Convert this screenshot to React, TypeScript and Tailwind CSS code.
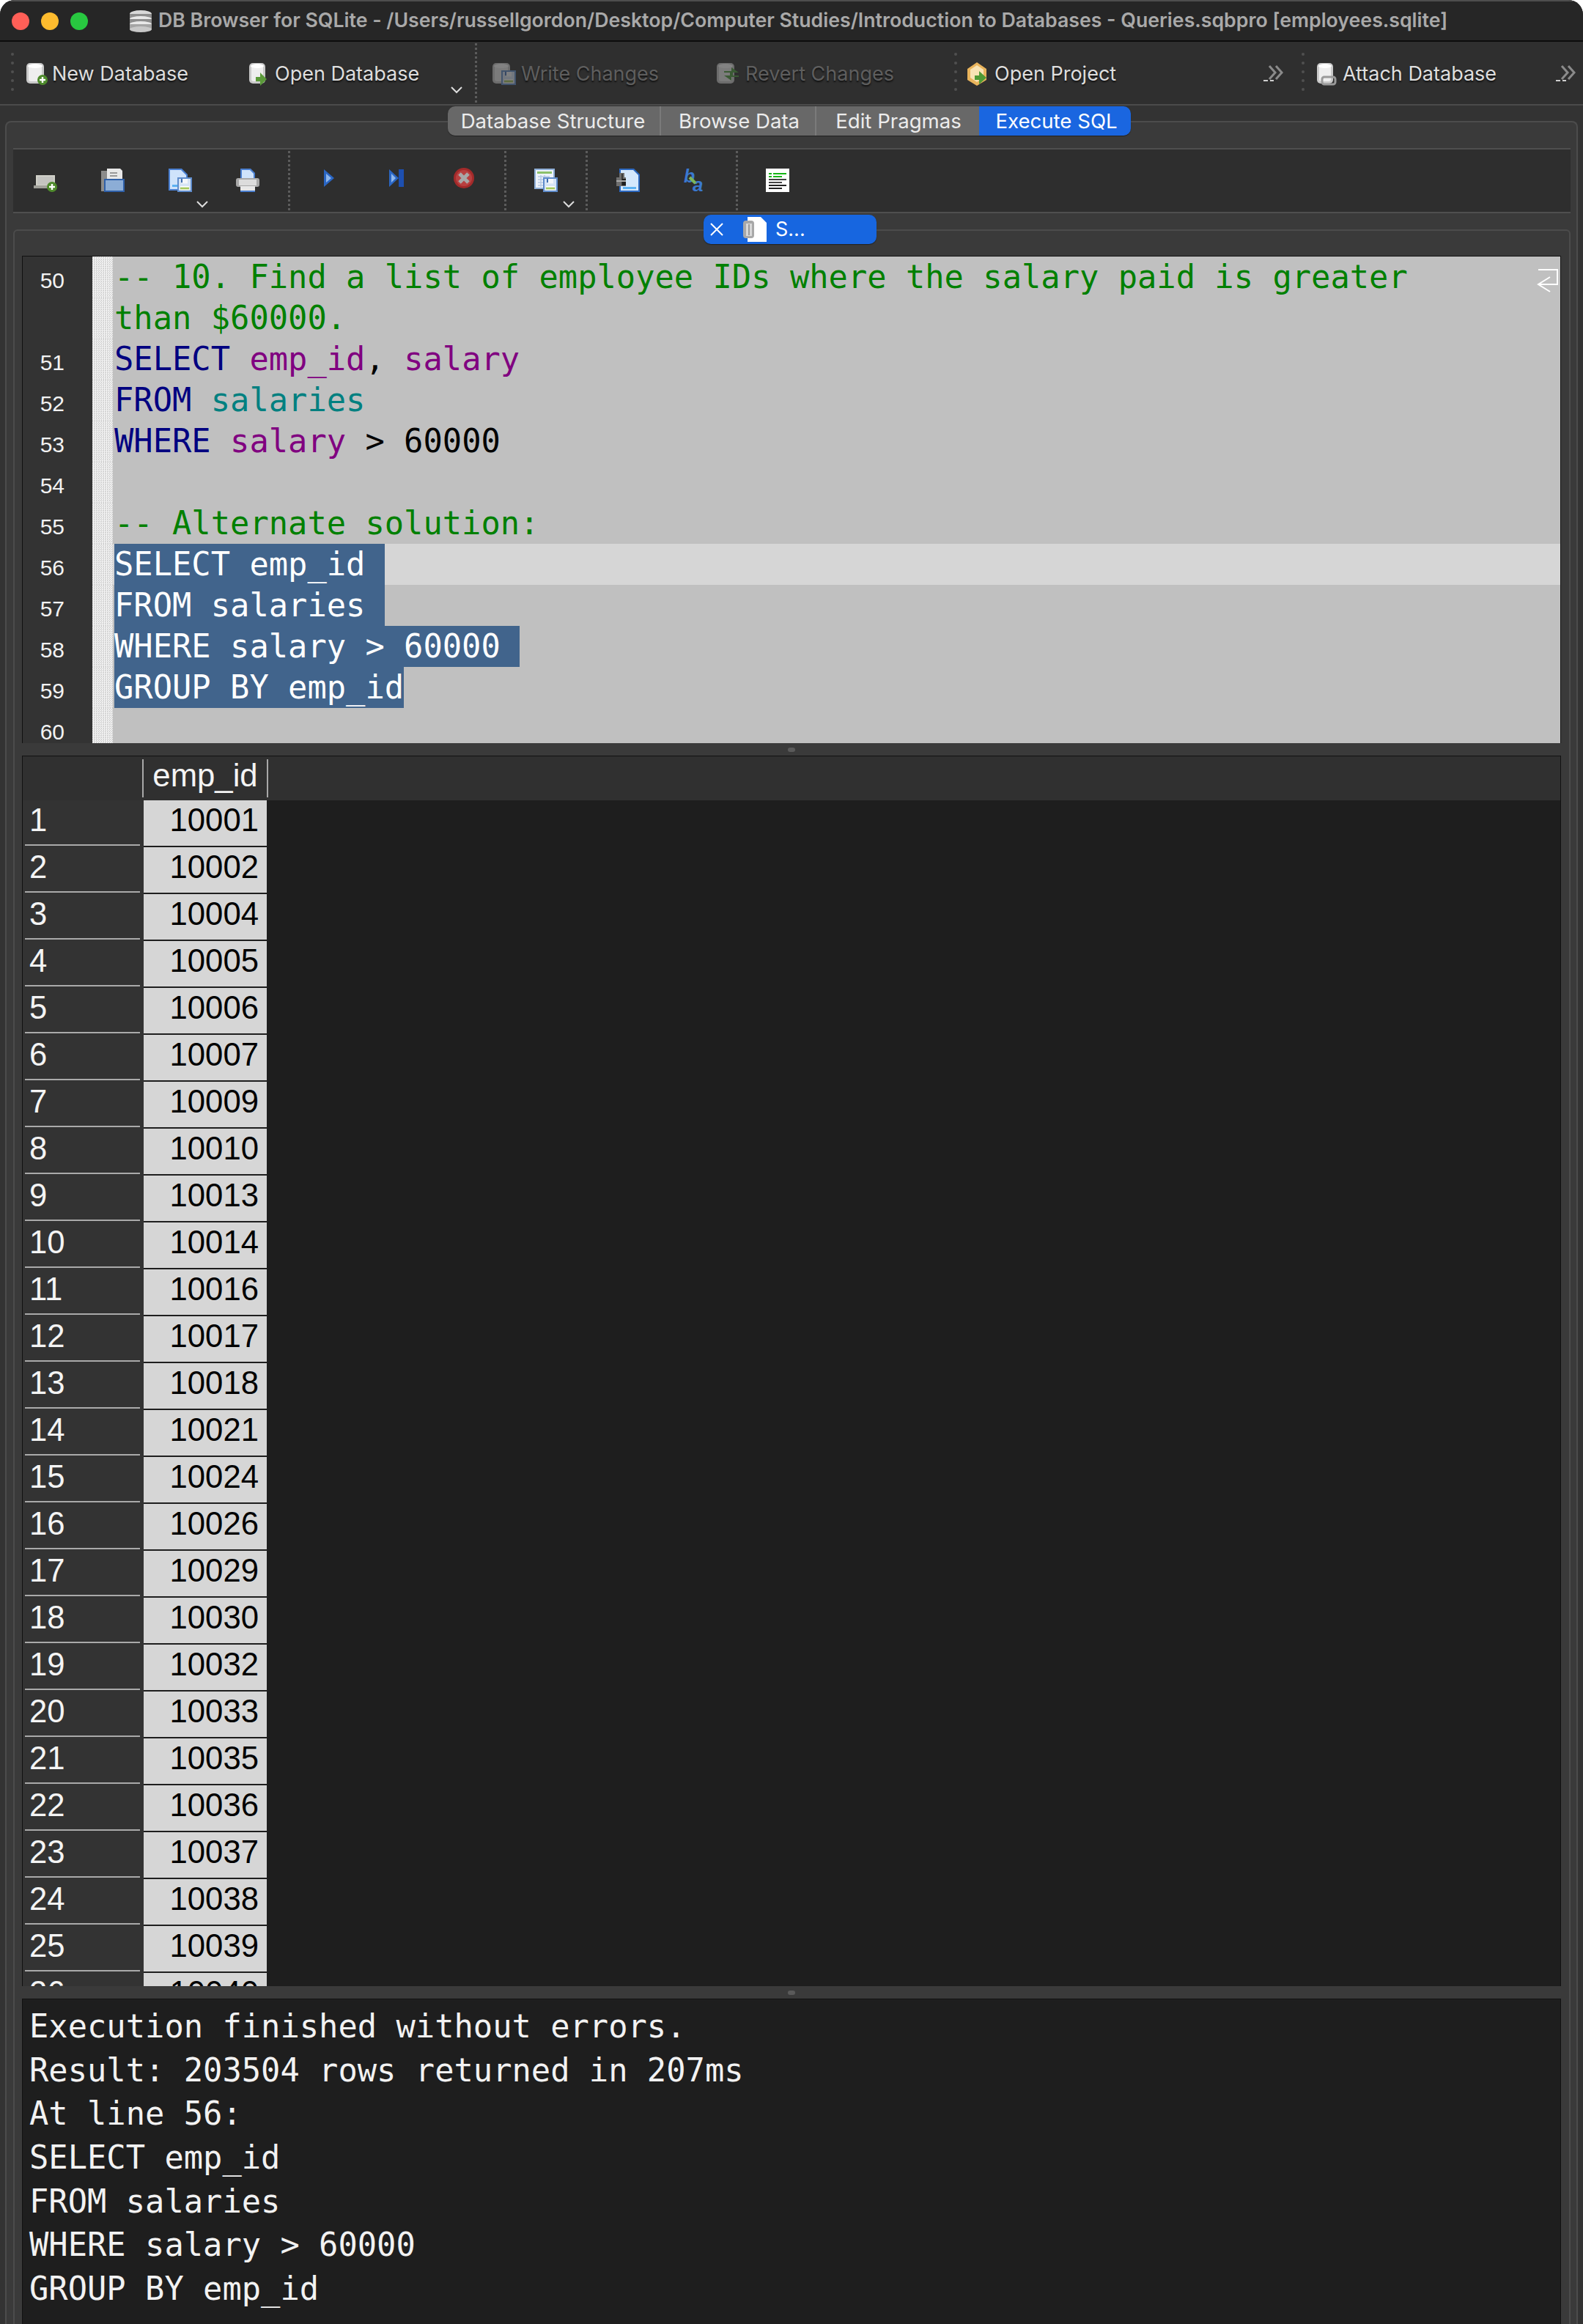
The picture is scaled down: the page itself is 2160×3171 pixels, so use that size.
import React from 'react';

const MONO = "font-['DejaVu_Sans_Mono',monospace] text-[43.75px] whitespace-pre";

const rowValues = [
    '10001', '10002', '10004', '10005', '10006', '10007', '10009', '10010', '10013', '10014', '10016', '10017', '10018',
    '10021', '10024', '10026', '10029', '10030', '10032', '10033', '10035', '10036', '10037', '10038', '10039', '10040',
];

const outputLines = [
    'Execution finished without errors.',
    'Result: 203504 rows returned in 207ms',
    'At line 56:',
    'SELECT emp_id',
    'FROM salaries',
    'WHERE salary > 60000',
    'GROUP BY emp_id',
];

/* ---------- icons ---------- */

const Cylinder = ({ x = 0, w = 24 }: { x?: number; w?: number }) => (
    <g>
        <rect x={x} y="1" width={w} height="28" rx="5" fill="#c9c9c9" />
        <rect x={x + 3} y="4" width={w - 6} height="22" rx="3" fill="#eeeeee" />
        <ellipse cx={x + w / 2} cy="5" rx={w / 2 - 2} ry="3" fill="#ffffff" />
    </g>
);

const PlusBadge = ({ cx = 24, cy = 25 }: { cx?: number; cy?: number }) => (
    <g>
        <circle cx={cx} cy={cy} r="7" fill="#4e8a2c" />
        <rect x={cx - 4} y={cy - 1.2} width="8" height="2.4" fill="#fff" />
        <rect x={cx - 1.2} y={cy - 4} width="2.4" height="8" fill="#fff" />
    </g>
);

const Floppy = ({ x = 12, y = 12, s = 20 }: { x?: number; y?: number; s?: number }) => (
    <g>
        <rect x={x} y={y} width={s} height={s} fill="#5f8ccb" />
        <rect x={x + 2} y={y + 2} width={s - 4} height={s - 4} fill="#d6e4f6" />
        <rect x={x + 5} y={y + 2} width={s - 11} height={s * 0.32} fill="#f4f7fb" />
        <rect x={x + 5} y={y + 2} width="2" height={s * 0.26} fill="#3f6db0" />
        <rect x={x + 4} y={y + s * 0.6} width={s - 8} height={s * 0.28} fill="#fff" />
        <rect x={x + 4} y={y + s * 0.68} width={s - 8} height={s * 0.14} fill="#a5c95f" />
    </g>
);

const PageShape = ({ x = 0, w = 24, h = 28 }: { x?: number; w?: number; h?: number }) => (
    <g>
        <path d={`M${x} 0h${w - 8}l8 8v${h - 8}h-${w}z`} fill="#4a7fd0" />
        <path d={`M${x + 2} 2h${w - 11}l7 7v${h - 11}h-${w - 4}z`} fill="#cfe3fb" />
        <rect x={x + 5} y={h - 8} width={w - 10} height="3" fill="#5db1f2" />
    </g>
);

const NewDbIcon = () => (
    <svg width="32" height="32" viewBox="0 0 32 32">
        <Cylinder x={0} w={24} />
        <PlusBadge cx={22} cy={24} />
    </svg>
);

const OpenDbIcon = () => (
    <svg width="28" height="32" viewBox="0 0 28 32">
        <Cylinder x={0} w={22} />
        <path d="M9 20h6v-6l9 9-9 9v-6H9z" fill="#5b9a3a" />
    </svg>
);

const WriteDbIcon = () => (
    <svg width="32" height="32" viewBox="0 0 32 32">
        <Cylinder x={0} w={24} />
        <Floppy x={12} y={11} s={20} />
    </svg>
);

const RevertDbIcon = () => (
    <svg width="32" height="32" viewBox="0 0 32 32">
        <Cylinder x={0} w={24} />
        <path d="M10 12h10V7l10 7H10zM30 20H20v5L10 18h20z" fill="#4c9a3c" />
        <rect x="18" y="13" width="4" height="6" fill="#4c9a3c" />
    </svg>
);

const ProjectIcon = () => (
    <svg width="32" height="32" viewBox="0 0 32 32">
        <path d="M15 0l13 9v15l-13 8-13-8V9z" fill="#e9b45c" />
        <path d="M15 4l9 6v11l-9 6-9-6V10z" fill="#f8e3b4" />
        <path d="M12 18h6v-6l10 9-10 9v-6h-6z" fill="#4f9a35" />
    </svg>
);

const AttachIcon = () => (
    <svg width="32" height="32" viewBox="0 0 32 32">
        <Cylinder x={2} w={22} />
        <rect x="9" y="20" width="18" height="10" rx="3" fill="none" stroke="#9a9a9a" strokeWidth="3" />
    </svg>
);

const AddRecordIcon = () => (
    <svg width="32" height="32" viewBox="0 0 32 32">
        <rect x="3" y="9" width="26" height="15" fill="#d0d0c8" />
        <rect x="5" y="11" width="22" height="11" fill="#c4c4c0" />
        <rect x="0" y="23" width="22" height="4" fill="#a0a09a" />
        <PlusBadge cx={25} cy={25} />
    </svg>
);

const OpenFileIcon = () => (
    <svg width="32" height="32" viewBox="0 0 32 32">
        <rect x="0" y="3" width="10" height="28" fill="#8c8c8c" />
        <path d="M8 0h18l3 3v12H8z" fill="#e8e8e8" />
        <rect x="12" y="5" width="10" height="2" fill="#999" />
        <rect x="12" y="9" width="10" height="2" fill="#999" />
        <rect x="4" y="14" width="28" height="18" fill="#2f60a8" />
        <rect x="6" y="16" width="24" height="14" fill="#8cadd6" />
    </svg>
);

const SaveFileIcon = () => (
    <svg width="32" height="32" viewBox="0 0 32 32">
        <PageShape w={26} h={30} />
        <Floppy x={12} y={12} s={20} />
    </svg>
);

const PrintIcon = () => (
    <svg width="32" height="32" viewBox="0 0 32 32">
        <path d="M6 0h14l6 6v12H6z" fill="#4a7fd0" />
        <path d="M8 2h11l5 5v11H8z" fill="#cfe3fb" />
        <rect x="0" y="13" width="32" height="12" rx="3" fill="#a8a8a8" />
        <rect x="4" y="15" width="24" height="8" fill="#dcdcdc" />
        <rect x="6" y="24" width="20" height="6" fill="#e8e8e8" />
        <rect x="6" y="30" width="20" height="2" fill="#4a7fd0" />
    </svg>
);

const PlayIcon = () => (
    <svg width="14" height="24" viewBox="0 0 14 24">
        <path d="M0 0l14 12L0 24z" fill="#2a66c4" />
        <path d="M3 6l7 6-7 6z" fill="#8fb7ec" />
    </svg>
);

const PlayLineIcon = () => (
    <svg width="20" height="24" viewBox="0 0 20 24">
        <path d="M0 0l13 12L0 24z" fill="#2a66c4" />
        <path d="M3 6l6 6-6 6z" fill="#8fb7ec" />
        <rect x="13" y="0" width="7" height="24" fill="#1d4fb0" />
    </svg>
);

const StopIcon = () => (
    <svg width="28" height="28" viewBox="0 0 28 28">
        <circle cx="14" cy="14" r="14" fill="#a32a2a" />
        <circle cx="14" cy="14" r="11" fill="#b84040" />
        <path d="M8 8l12 12M20 8L8 20" stroke="#a8a8a8" strokeWidth="5" />
    </svg>
);

const SaveResultsIcon = () => (
    <svg width="32" height="32" viewBox="0 0 32 32">
        <rect x="0" y="0" width="28" height="28" fill="#8fafd8" />
        <rect x="2" y="2" width="24" height="24" fill="#eef3fa" />
        <rect x="4" y="4" width="20" height="3" fill="#8cc06a" />
        <path d="M5 11h16M5 15h16M5 19h16M5 23h16M9 9v16M14 9v16" stroke="#b6c9e4" strokeWidth="1.5" />
        <Floppy x={12} y={12} s={20} />
    </svg>
);

const FindIcon = () => (
    <svg width="32" height="32" viewBox="0 0 32 32">
        <path d="M4 0h20l8 8v24H4z" fill="#2c68c0" />
        <path d="M6 2h17l7 7v21H6z" fill="#d4e7fc" />
        <rect x="9" y="25" width="18" height="3" fill="#5db1f2" />
        <path d="M4 6h7v6h2v12H0V12h4z" fill="#6e6e6e" />
        <rect x="7" y="7" width="2" height="16" fill="#3a3a3a" />
        <rect x="8" y="14" width="5" height="9" fill="#1e1e1e" />
        <rect x="0" y="16" width="13" height="2" fill="#a8a8a8" />
    </svg>
);

const ReplaceIcon = () => (
    <svg className="overflow-visible" width="32" height="32" viewBox="0 0 32 32">
        <text x="1" y="19" fontSize="25" fontWeight="700" fontStyle="italic" fontFamily="Liberation Sans, sans-serif" fill="#3a78cf">b</text>
        <text x="13" y="31" fontSize="26" fontWeight="700" fontStyle="italic" fontFamily="Liberation Sans, sans-serif" fill="#3a78cf">a</text>
        <path d="M9 12l8 8" stroke="#7db55a" strokeWidth="4" />
    </svg>
);

const SqlListIcon = () => (
    <svg width="32" height="32" viewBox="0 0 32 32">
        <rect width="32" height="32" fill="#fff" />
        <rect x="4" y="6" width="4" height="2" fill="#16b516" />
        <rect x="10" y="6" width="18" height="2" fill="#16b516" />
        <rect x="4" y="10" width="4" height="2" fill="#16b516" />
        <rect x="10" y="10" width="12" height="2" fill="#16b516" />
        <rect x="4" y="14" width="24" height="2" fill="#444" />
        <rect x="4" y="18" width="18" height="2" fill="#444" />
        <rect x="4" y="22" width="24" height="2" fill="#222" />
        <rect x="4" y="26" width="18" height="2" fill="#222" />
    </svg>
);

const TabFileIcon = () => (
    <svg width="32" height="34" viewBox="0 0 32 34">
        <path d="M6 0h18l8 8v26H6z" fill="#ffffff" />
        <rect x="0" y="5" width="15" height="24" rx="4" fill="#a8a8a8" />
        <rect x="4" y="9" width="8" height="17" fill="#d8d8d8" />
        <rect x="7" y="10" width="2" height="15" fill="#9a9a9a" />
    </svg>
);

const TitleDbIcon = () => (
    <svg width="30" height="30" viewBox="0 0 30 30">
        <ellipse cx="15" cy="5" rx="15" ry="5" fill="#d8d8d8" />
        <rect x="0" y="5" width="30" height="7" fill="#8d8d8d" />
        <ellipse cx="15" cy="12" rx="15" ry="4" fill="#e8e8e8" />
        <rect x="0" y="12" width="30" height="7" fill="#8d8d8d" />
        <ellipse cx="15" cy="19" rx="15" ry="4" fill="#e8e8e8" />
        <rect x="0" y="19" width="30" height="7" fill="#a5a5a5" />
        <ellipse cx="15" cy="26" rx="15" ry="4" fill="#c8c8c8" />
    </svg>
);

const Chevron = ({ className }: { className: string }) => (
    <svg className={`absolute ${className}`} width="16" height="10" viewBox="0 0 16 10">
        <path d="M1 1l7 7 7-7" fill="none" stroke="#dddddd" strokeWidth="2" />
    </svg>
);

const MoreArrows = () => (
    <svg width="28" height="24" viewBox="0 0 28 24">
        <path d="M8 2l8 9-8 9M17 2l8 9-8 9" fill="none" stroke="#8a8a8a" strokeWidth="3" />
        <path d="M0 22h6M9 22h5" stroke="#cfcfcf" strokeWidth="2" />
    </svg>
);

/* ---------- small pieces ---------- */

const Handle = () => (
    <div className="flex flex-col gap-[8px] shrink-0 mb-[4px]">
        {[0, 1, 2, 3, 4].map(i => (
            <div key={i} className="w-[4px] h-[4px] rounded-full bg-[#505050]" />
        ))}
    </div>
);

const DottedSep = () => <div className="self-stretch shrink-0 border-l-[3px] border-dotted border-[#5c5c5c] my-[2px]" />;

const ToolButton = ({ icon, label, className, iconBox, disabled }: { icon: React.ReactNode; label: string; className: string; iconBox: string; disabled?: boolean }) => (
    <div className={`flex items-center shrink-0 pt-[3px] ${className}`}>
        <div className={`flex shrink-0 ${iconBox} ${disabled ? 'opacity-40' : ''}`}>{icon}</div>
        <span className={`text-[27px] [text-shadow:0_2px_2px_#111] ${disabled ? 'text-[#5e5e5e]' : 'text-[#dedede]'}`}>{label}</span>
    </div>
);

const Tab = ({ label, className }: { label: string; className: string }) => (
    <div className={`h-full flex items-center justify-center pt-[2px] text-[27.6px] text-[#ececec] ${className}`}>{label}</div>
);

const Splitter = () => (
    <div className="h-[17px] shrink-0 flex items-center justify-center">
        <div className="w-[10px] h-[6px] rounded-full bg-[#5a5a5a]" />
    </div>
);

const EditorRow = ({ num, active, children }: { num?: number; active?: boolean; children?: React.ReactNode }) => (
    <div className={`flex h-[56px] ${active ? 'bg-[#d6d6d6]' : ''}`}>
        <div className="w-[95px] shrink-0 bg-[#333333] pr-[38px] text-right text-[30px] leading-[66px] text-[#f2f2f2] font-['Liberation_Sans',sans-serif]">{num}</div>
        <div className="w-[28px] shrink-0 bg-[repeating-conic-gradient(#f4f4f4_0_25%,#d0d0d0_0_50%)] bg-[length:3px_3px]" />
        <div className={`pl-[2px] leading-[56px] ${MONO}`}>{children}</div>
    </div>
);

const Selected = ({ text }: { text: string }) => <span className="inline-block h-[56px] bg-[#41648c] text-white">{text}</span>;

const Comment = ({ text }: { text: string }) => <span className="text-[#008000]">{text}</span>;
const Keyword = ({ text }: { text: string }) => <span className="text-[#000080]">{text}</span>;
const Column = ({ text }: { text: string }) => <span className="text-[#800080]">{text}</span>;

export default function App() {
    return (
        <div className="w-[2160px] h-[3171px] bg-white overflow-hidden font-['Inter',sans-serif]">
            <div className="h-full flex flex-col bg-[#333333] rounded-t-[20px] overflow-hidden">
                {/* Title bar */}
                <div className="h-[57px] shrink-0 flex items-center bg-[#262626] border-t-2 border-b-2 border-t-[#4e4e4e] border-b-[#0c0c0c] pl-[16px]">
                    <div className="w-[24px] h-[24px] rounded-full bg-[#ff5f57]" />
                    <div className="w-[24px] h-[24px] rounded-full bg-[#febc2e] ml-[16px]" />
                    <div className="w-[24px] h-[24px] rounded-full bg-[#28c840] ml-[16px]" />
                    <div className="ml-[57px] flex"><TitleDbIcon /></div>
                    <span className="ml-[9px] -mt-[3px] text-[26.7px] font-semibold text-[#a9a9a9] whitespace-nowrap">
                        DB Browser for SQLite - /Users/russellgordon/Desktop/Computer Studies/Introduction to Databases - Queries.sqbpro [employees.sqlite]
                    </span>
                </div>

                {/* Main toolbar */}
                <div className="relative h-[87px] shrink-0 flex items-center bg-[#2f2f2f] border-b-2 border-[#4b4b4b] pl-[15px]">
                    <Handle />
                    <ToolButton icon={<NewDbIcon />} label="New Database" iconBox="w-[35px]" className="ml-[17px] w-[304px]" />
                    <ToolButton icon={<OpenDbIcon />} label="Open Database" iconBox="w-[35px]" className="w-[308px]" />
                    <DottedSep />
                    <Chevron className="left-[615px] top-[61px]" />
                    <ToolButton icon={<WriteDbIcon />} label="Write Changes" iconBox="w-[39px]" disabled className="ml-[21px] w-[306px]" />
                    <ToolButton icon={<RevertDbIcon />} label="Revert Changes" iconBox="w-[39px]" disabled className="w-[324px]" />
                    <Handle />
                    <ToolButton icon={<ProjectIcon />} label="Open Project" iconBox="w-[39px]" className="ml-[12px] w-[406px]" />
                    <MoreArrows />
                    <div className="ml-[24px]"><Handle /></div>
                    <ToolButton icon={<AttachIcon />} label="Attach Database" iconBox="w-[37px]" className="ml-[15px] w-[328px]" />
                    <MoreArrows />
                </div>

                {/* Tabs */}
                <div className="relative z-10 h-[40px] mt-[1px] shrink-0 pl-[611px] flex">
                    <div className="flex h-full rounded-[10px] overflow-hidden shadow-[0_1px_1px_#222]">
                        <Tab label="Database Structure" className="w-[291px] pr-[2px] bg-[#686868] border-r-2 border-[#7a7a7a]" />
                        <Tab label="Browse Data" className="w-[212px] pl-[3px] bg-[#686868] border-r-2 border-[#7a7a7a]" />
                        <Tab label="Edit Pragmas" className="w-[222px] pl-[2px] bg-[#686868]" />
                        <Tab label="Execute SQL" className="w-[207px] pl-[4px] bg-[#1a66e0] text-white" />
                    </div>
                </div>

                {/* Tab pane */}
                <div className="flex-1 min-h-0 -mt-[20px] mx-[7px] flex flex-col bg-[#3a3a3a] border-2 border-b-0 border-[#4c4c4c] rounded-t-[8px] pt-[35px] px-[9px]">
                    {/* SQL toolbar */}
                    <div className="relative h-[89px] shrink-0 flex items-stretch bg-[#2e2e2e] border-y-2 border-[#4f4f4f] -mr-[1px]">
                        <div className="flex items-start pt-[26px] pl-[28px] pr-[39px] gap-[60px]">
                            <div className="flex w-[32px] h-[32px]"><AddRecordIcon /></div>
                            <div className="flex w-[32px] h-[32px]"><OpenFileIcon /></div>
                            <div className="flex w-[32px] h-[32px]"><SaveFileIcon /></div>
                            <div className="flex w-[32px] h-[32px]"><PrintIcon /></div>
                        </div>
                        <DottedSep />
                        <div className="flex items-center pb-[8px] pl-[37px] pr-[39px] gap-[60px]">
                            <div className="flex w-[32px] justify-center"><PlayIcon /></div>
                            <div className="flex w-[32px] justify-center"><PlayLineIcon /></div>
                            <div className="flex w-[32px] justify-center"><StopIcon /></div>
                        </div>
                        <DottedSep />
                        <div className="flex items-start pt-[26px] pl-[38px] pr-[38px]">
                            <div className="flex w-[32px] h-[32px]"><SaveResultsIcon /></div>
                        </div>
                        <DottedSep />
                        <div className="flex items-start pt-[26px] pl-[39px] pr-[40px] gap-[59px]">
                            <div className="flex w-[32px] h-[32px]"><FindIcon /></div>
                            <div className="flex w-[32px] h-[32px]"><ReplaceIcon /></div>
                        </div>
                        <DottedSep />
                        <div className="flex items-start pt-[26px] pl-[38px]">
                            <div className="flex w-[32px] h-[32px]"><SqlListIcon /></div>
                        </div>
                        <Chevron className="left-[250px] top-[70px]" />
                        <Chevron className="left-[750px] top-[70px]" />
                    </div>

                    {/* Editor tab strip */}
                    <div className="relative z-10 h-[40px] mt-[2px] shrink-0 pl-[942px]">
                        <div className="w-[236px] h-full flex items-center rounded-[10px] bg-[#1766e0] text-white text-[27px] shadow-[0_1px_1px_#222]">
                            <svg className="ml-[9px]" width="18" height="18" viewBox="0 0 18 18">
                                <path d="M1 1l16 16M17 1L1 17" stroke="#fff" strokeWidth="2" />
                            </svg>
                            <div className="ml-[27px] flex"><TabFileIcon /></div>
                            <span className="ml-[12px]">S...</span>
                        </div>
                    </div>

                    {/* Inner pane */}
                    <div className="flex-1 min-h-0 -mt-[20px] -mr-[1px] flex flex-col border-2 border-b-0 border-[#4c4c4c] rounded-t-[6px] pt-[34px] pl-[10px] pr-[11px]">
                        {/* SQL editor */}
                        <div className="relative h-[665px] shrink-0 overflow-hidden bg-[#c0c0c0] border border-b-0 border-[#111111]">
                            <EditorRow num={50}><Comment text="-- 10. Find a list of employee IDs where the salary paid is greater" /></EditorRow>
                            <EditorRow><Comment text="than $60000." /></EditorRow>
                            <EditorRow num={51}>
                                <Keyword text="SELECT" /> <Column text="emp_id" />, <Column text="salary" />
                            </EditorRow>
                            <EditorRow num={52}>
                                <Keyword text="FROM" /> <span className="text-[#008080]">salaries</span>
                            </EditorRow>
                            <EditorRow num={53}>
                                <Keyword text="WHERE" /> <Column text="salary" /> <span className="text-black">&gt; 60000</span>
                            </EditorRow>
                            <EditorRow num={54} />
                            <EditorRow num={55}><Comment text="-- Alternate solution:" /></EditorRow>
                            <EditorRow num={56} active><Selected text={'SELECT emp_id\u00a0'} /></EditorRow>
                            <EditorRow num={57}><Selected text={'FROM salaries\u00a0'} /></EditorRow>
                            <EditorRow num={58}><Selected text={'WHERE salary > 60000\u00a0'} /></EditorRow>
                            <EditorRow num={59}><Selected text="GROUP BY emp_id" /></EditorRow>
                            <EditorRow num={60} />
                            {/* wrap marker */}
                            <svg className="absolute right-[2px] top-[17px]" width="30" height="32" viewBox="0 0 30 32">
                                <path d="M2 1h26v20H2M18 11L2 21l16 10" fill="none" stroke="#fff" strokeWidth="2" />
                            </svg>
                        </div>

                        <Splitter />

                        {/* Results table */}
                        <div className="h-[1679px] shrink-0 overflow-hidden bg-[#1e1e1e] border border-b-0 border-[#111111] font-['Liberation_Sans',sans-serif] text-[43.7px]">
                            <div className="h-[60px] flex bg-[#303030] text-[#f4f4f4]">
                                <div className="w-[163px] shrink-0" />
                                <div className="w-[172px] my-[4px] h-[52px] flex items-center justify-center pb-[8px] border-x-2 border-[#a8a8a8]">emp_id</div>
                                <div className="flex-1" />
                            </div>
                            {rowValues.map((value, i) => (
                                <div key={value} className="flex h-[64px]">
                                    <div className="w-[165px] shrink-0 h-full bg-[#333333] pt-[1px] pl-[3px] pr-[5px]">
                                        <div className="h-[61px] border-b-2 border-[#aaaaaa] leading-[52px] text-[#f4f4f4] pl-[6px]">{i + 1}</div>
                                    </div>
                                    <div className="w-[168px] shrink-0 h-[62px] bg-[#d6d6d6] text-black text-right pr-[11px] leading-[54px]">{value}</div>
                                </div>
                            ))}
                        </div>

                        <Splitter />

                        {/* Execution output */}
                        <div className={`flex-1 min-h-0 bg-[#1e1e1e] border border-b-0 border-[#111111] pt-[7px] pl-[9px] text-[#f2f2f2] leading-[60px] ${MONO}`}>
                            {outputLines.map(line => (
                                <div key={line} className="h-[59.7px]">{line}</div>
                            ))}
                        </div>
                    </div>
                </div>
            </div>
        </div>
    );
}
